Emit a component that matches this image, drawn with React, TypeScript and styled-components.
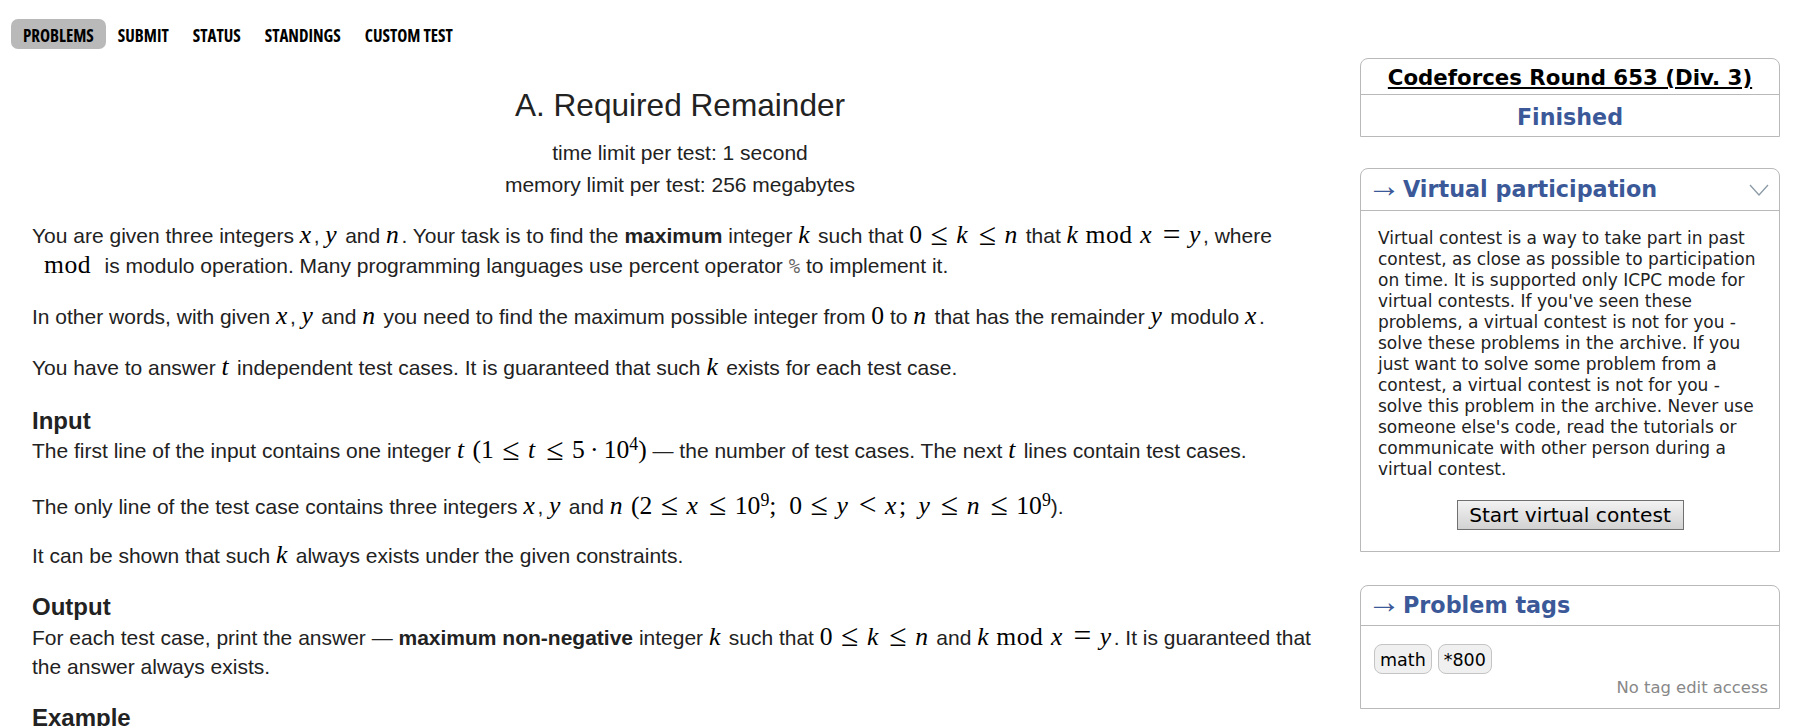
import React from "react";
import styled, { createGlobalStyle } from "styled-components";

const Global = createGlobalStyle`
  html, body { margin: 0; padding: 0; background: #fff; overflow: hidden; height: 726px; }
`;
const Page = styled.div`
  width: 1795px; height: 726px; overflow: hidden; display: flex; flex-direction: column;
  font-family: "Liberation Sans", Arial, sans-serif; color: #222;
`;
const TabBar = styled.nav`
  display: flex; padding: 19px 0 0 11px; height: 30px;
`;
const Tab = styled.a<{ $active?: boolean }>`
  display: flex; align-items: center; box-sizing: border-box; height: 30px; padding: 2px 12px 0; border-radius: 7px;
  font-family: "Open Sans", sans-serif; font-stretch: 75%;
  font-weight: 700; font-size: 17px; color: #000;
  background: ${(p) => (p.$active ? "#b9b9b9" : "transparent")};
`;
const Columns = styled.div`
  display: flex; flex: 1; min-height: 0;
`;
const Main = styled.main`
  width: 1296px; margin-left: 32px; flex: none; font-size: 21px; line-height: 29.5px;
`;
const Header = styled.header`
  text-align: center; padding-top: 34px;
`;
const Title = styled.h1`
  margin: 0; font-weight: 400; font-size: 31.6px; line-height: 44px; color: #222;
`;
const Limit = styled.div`
  line-height: 32px;
  &:first-of-type { margin-top: 10px; }
`;
const Para = styled.p<{ $gap?: number }>`
  margin: ${(p) => p.$gap ?? 20}px 0 0;
`;
const Heading = styled.div<{ $top: number; $lh: number }>`
  font-weight: 700; font-size: 24px; line-height: ${(p) => p.$lh}px; margin-top: ${(p) => p.$top}px; color: #222;
`;
const Tight = styled.p`
  margin: 0;
`;
const Mi = styled.i`
  font-family: "Liberation Serif", serif; font-style: italic; font-size: 1.22em; color: #000; line-height: 0; letter-spacing: 0.1em;
`;
const Mr = styled.span`
  font-family: "Liberation Serif", serif; font-size: 1.22em; color: #000; line-height: 0;
`;
const Mod = styled(Mr)`
  margin: 0 0.3em 0 0.2em; letter-spacing: 0.02em;
`;
const Rel = styled.span`
  font-family: "Liberation Serif", serif; font-size: 1.5em; color: #000; line-height: 0; margin: 0 0.27em; vertical-align: -0.06em;
`;
const Dot = styled.span`
  font-family: "Liberation Serif", serif; font-size: 1.22em; color: #000; line-height: 0; margin: 0 0.2em;
`;
const Sup = styled.sup`
  font-family: "Liberation Serif", serif; font-size: 0.85em; line-height: 0; color: #000;
`;
const Pct = styled.code`
  font-family: "DejaVu Sans Mono", monospace; font-size: 0.9em; color: #666;
`;
const Side = styled.aside`
  width: 420px; margin-left: 32px; flex: none; display: flex; flex-direction: column;
  font-family: "DejaVu Sans", Verdana, sans-serif; padding-top: 9px;
`;
const Box = styled.section<{ $gap: number }>`
  box-sizing: border-box; width: 420px; border: 1px solid #b9b9b9; border-radius: 8px 8px 0 0;
  margin-bottom: ${(p) => p.$gap}px;
`;
const RoundName = styled.a`
  display: block; text-align: center; font-weight: 700; font-size: 21.3px; line-height: 33px; padding-top: 2px; color: #000;
  text-decoration: underline; border-bottom: 1px solid #b9b9b9;
`;
const Finished = styled.div`
  text-align: center; font-weight: 700; font-size: 22.2px; line-height: 35px; padding: 5px 0 1px; color: #3b5998;
`;
const BoxHead = styled.div<{ $h: number }>`
  box-sizing: border-box; height: ${(p) => p.$h}px; display: flex; align-items: center; padding: 0 10px 2px 6px;
  border-bottom: 1px solid #b9b9b9; font-weight: 700; font-size: 22.3px; color: #3b5998;
`;
const Arrow = styled.span`
  font-family: "Liberation Serif", serif; font-weight: 400; font-size: 34px; line-height: 1; margin-right: 2px; padding-bottom: 5px;
`;
const Chevron = styled.svg`
  margin: 2px 0 0 auto; width: 20px; height: 12px; flex: none;
`;
const BoxBody = styled.div`
  padding: 16.5px 17px 0; font-size: 17px; line-height: 21px; color: #222; height: 340px; box-sizing: border-box;
`;
const ButtonRow = styled.div`
  display: flex; justify-content: center; margin-top: 20.5px;
`;
const StartButton = styled.button`
  width: 227px; height: 30px; padding: 0; border: 1px solid #707070; border-radius: 0;
  background: linear-gradient(#f2f2f2, #d2d2d2); font-family: "DejaVu Sans", Verdana, sans-serif;
  font-size: 20.2px; color: #000;
`;
const TagBody = styled.div`
  padding: 18px 11px 0 13px; height: 82px; box-sizing: border-box;
`;
const Tags = styled.div`
  display: flex; gap: 6px;
`;
const Tag = styled.span`
  height: 30px; box-sizing: border-box; padding: 1px 5px 0; display: flex; align-items: center;
  background: #f0f0f0; border: 1px solid #c4c4c4; border-radius: 8px; font-size: 17.5px; color: #000;
`;
const NoEdit = styled.div`
  text-align: right; font-size: 16.4px; color: #888; line-height: 20px; margin-top: 4px;
`;

export default function App() {
  return (
    <Page>
      <Global />
      <TabBar>
        <Tab $active>PROBLEMS</Tab>
        <Tab>SUBMIT</Tab>
        <Tab>STATUS</Tab>
        <Tab>STANDINGS</Tab>
        <Tab>CUSTOM TEST</Tab>
      </TabBar>
      <Columns>
        <Main>
          <Header>
            <Title>A. Required Remainder</Title>
            <Limit>time limit per test: 1 second</Limit>
            <Limit>memory limit per test: 256 megabytes</Limit>
          </Header>
          <Para $gap={20}>
            You are given three integers <Mi>x</Mi>, <Mi>y</Mi> and <Mi>n</Mi>. Your task is to find the <b>maximum</b> integer <Mi>k</Mi> such that <Mr>0</Mr><Rel>≤</Rel><Mi>k</Mi><Rel>≤</Rel><Mi>n</Mi> that <Mi>k</Mi><Mod>mod</Mod><Mi>x</Mi><Rel>=</Rel><Mi>y</Mi>, where<br />
            <Mod>&nbsp;mod</Mod> is modulo operation. Many programming languages use percent operator <Pct>%</Pct> to implement it.
          </Para>
          <Para $gap={21}>
            In other words, with given <Mi>x</Mi>, <Mi>y</Mi> and <Mi>n</Mi> you need to find the maximum possible integer from <Mr>0</Mr> to <Mi>n</Mi> that has the remainder <Mi>y</Mi> modulo <Mi>x</Mi>.
          </Para>
          <Para $gap={21}>
            You have to answer <Mi>t</Mi> independent test cases. It is guaranteed that such <Mi>k</Mi> exists for each test case.
          </Para>
          <Heading $top={24} $lh={30}>Input</Heading>
          <Tight>
            The first line of the input contains one integer <Mi>t</Mi> <Mr>(1</Mr><Rel>≤</Rel><Mi>t</Mi><Rel>≤</Rel><Mr>5</Mr><Dot>·</Dot><Mr>10</Mr><Sup>4</Sup><Mr>)</Mr> — the number of test cases. The next <Mi>t</Mi> lines contain test cases.
          </Tight>
          <Para $gap={26}>
            The only line of the test case contains three integers <Mi>x</Mi>, <Mi>y</Mi> and <Mi>n</Mi> <Mr>(2</Mr><Rel>≤</Rel><Mi>x</Mi><Rel>≤</Rel><Mr>10</Mr><Sup>9</Sup><Mr>;&nbsp; 0</Mr><Rel>≤</Rel><Mi>y</Mi><Rel>&lt;</Rel><Mi>x</Mi><Mr>;&nbsp;</Mr> <Mi>y</Mi><Rel>≤</Rel><Mi>n</Mi><Rel>≤</Rel><Mr>10</Mr><Sup>9</Sup>).
          </Para>
          <Para $gap={20}>
            It can be shown that such <Mi>k</Mi> always exists under the given constraints.
          </Para>
          <Heading $top={20} $lh={32}>Output</Heading>
          <Tight>
            For each test case, print the answer — <b>maximum non-negative</b> integer <Mi>k</Mi> such that <Mr>0</Mr><Rel>≤</Rel><Mi>k</Mi><Rel>≤</Rel><Mi>n</Mi> and <Mi>k</Mi><Mod>mod</Mod><Mi>x</Mi><Rel>=</Rel><Mi>y</Mi>. It is guaranteed that the answer always exists.
          </Tight>
          <Heading $top={21} $lh={30}>Example</Heading>
        </Main>
        <Side>
          <Box $gap={31}>
            <RoundName>Codeforces Round 653 (Div. 3)</RoundName>
            <Finished>Finished</Finished>
          </Box>
          <Box $gap={33}>
            <BoxHead $h={42}>
              <Arrow>→</Arrow>Virtual participation
              <Chevron viewBox="0 0 20 12"><path d="M1 1 L10 11 L19 1" fill="none" stroke="#8c9aa6" strokeWidth="1.3" /></Chevron>
            </BoxHead>
            <BoxBody>
              Virtual contest is a way to take part in past contest, as close as possible to participation on time. It is supported only ICPC mode for virtual contests. If you've seen these problems, a virtual contest is not for you - solve these problems in the archive. If you just want to solve some problem from a contest, a virtual contest is not for you - solve this problem in the archive. Never use someone else's code, read the tutorials or communicate with other person during a virtual contest.
              <ButtonRow><StartButton>Start virtual contest</StartButton></ButtonRow>
            </BoxBody>
          </Box>
          <Box $gap={0}>
            <BoxHead $h={40}><Arrow>→</Arrow>Problem tags</BoxHead>
            <TagBody>
              <Tags><Tag>math</Tag><Tag>*800</Tag></Tags>
              <NoEdit>No tag edit access</NoEdit>
            </TagBody>
          </Box>
        </Side>
      </Columns>
    </Page>
  );
}
